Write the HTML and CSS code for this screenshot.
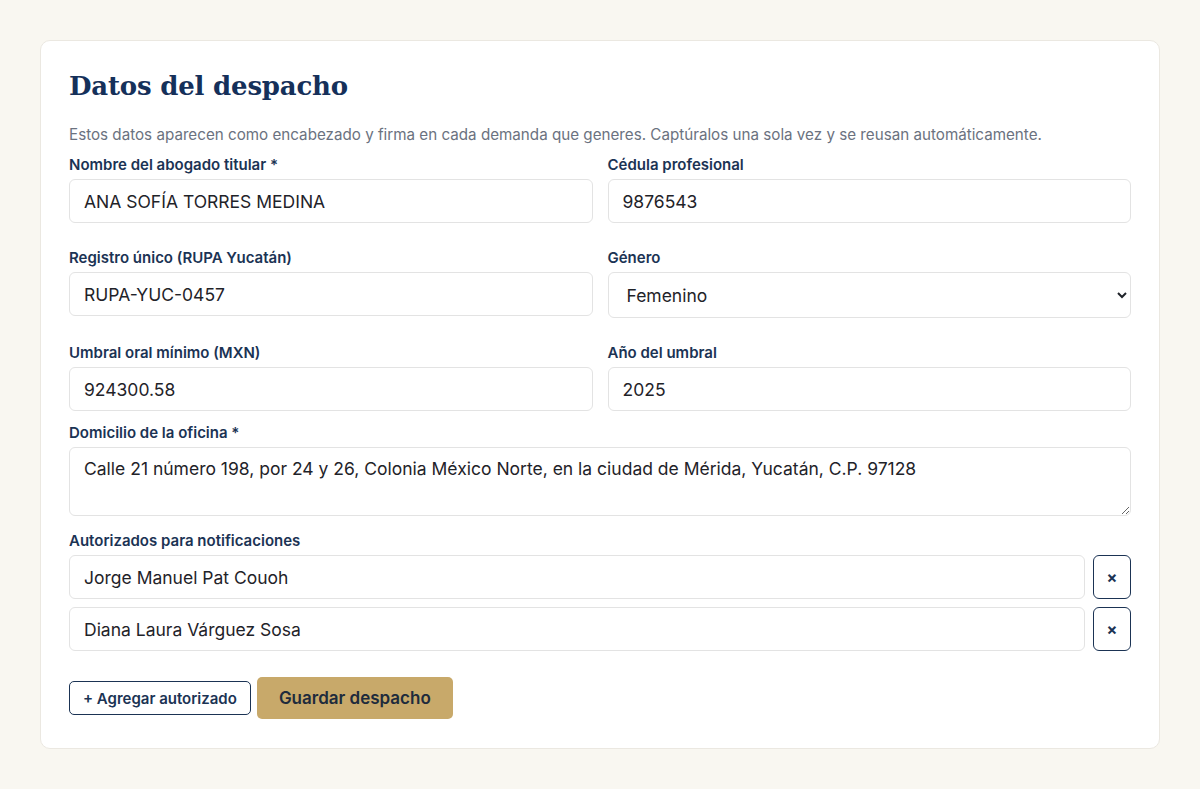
FILE: index.html
```html
<!DOCTYPE html>
<html lang="es">
	<head>
		<meta charset="UTF-8">
		<meta name="viewport" content="width=device-width,initial-scale=1.0">
		<title>Datos del despacho</title>
		<link rel="stylesheet" href="styles.css">
	</head>
	<body>
		<div class="card">
			<h1 class="title">Datos del despacho</h1>
			<p class="hint">Estos datos aparecen como encabezado y firma en cada demanda que generes. Captúralos una sola vez y se reusan automáticamente.</p>
			<form id="frmDespacho">
				<div class="grid">
					<div class="field">
						<label for="abogado">Nombre del abogado titular *</label>
						<input id="abogado" type="text" value="ANA SOFÍA TORRES MEDINA">
					</div>
					<div class="field">
						<label for="cedula">Cédula profesional</label>
						<input id="cedula" type="text" value="9876543">
					</div>
					<div class="field">
						<label for="rupa">Registro único (RUPA Yucatán)</label>
						<input id="rupa" type="text" value="RUPA-YUC-0457">
					</div>
					<div class="field">
						<label for="genero">Género</label>
						<select id="genero">
							<option>Masculino</option>
							<option selected>Femenino</option>
						</select>
					</div>
					<div class="field">
						<label for="umbral">Umbral oral mínimo (MXN)</label>
						<input id="umbral" type="text" value="924300.58">
					</div>
					<div class="field">
						<label for="anio">Año del umbral</label>
						<input id="anio" type="text" value="2025">
					</div>
				</div>
				<div class="field tight">
					<label for="domicilio">Domicilio de la oficina *</label>
					<textarea id="domicilio" rows="2">Calle 21 número 198, por 24 y 26, Colonia México Norte, en la ciudad de Mérida, Yucatán, C.P. 97128</textarea>
				</div>
				<div class="field">
					<label>Autorizados para notificaciones</label>
					<div id="autorizados">
						<div class="row">
							<input type="text" value="Jorge Manuel Pat Couoh">
							<button type="button" class="btnRemove">×</button>
						</div>
						<div class="row">
							<input type="text" value="Diana Laura Várguez Sosa">
							<button type="button" class="btnRemove">×</button>
						</div>
					</div>
				</div>
				<div class="actions">
					<button type="button" class="btnAdd">+ Agregar autorizado</button>
					<button type="submit" class="btnSave">Guardar despacho</button>
				</div>
			</form>
		</div>
	</body>
</html>
```

FILE: styles.css
```css
body{margin:0;background:#f9f7f1;font-family:Inter,"Noto Sans",sans-serif;color:#1f2937;padding:40px;}
.card{background:#fff;border:1px solid #ebe8e1;border-radius:10px;padding:27px 28px 29px 28px;}
.title{font-family:"DejaVu Serif","Liberation Serif",serif;font-size:26px;font-weight:700;color:#15305a;margin:0 0 22px 0;line-height:36px;letter-spacing:-0.2px;}
.hint{font-size:15.2px;color:#6b7280;margin:0 0 12px 0;line-height:18px;}
.grid{display:grid;grid-template-columns:1fr 1fr;column-gap:15px;row-gap:13px;}
.field{margin-bottom:13px;}
.field.tight{margin-bottom:12px;}
.field label{display:block;font-size:15px;font-weight:600;color:#1b3354;line-height:18px;margin-bottom:5px;}
input,select,textarea{font-family:Inter,"Noto Sans",sans-serif;font-size:17.5px;color:#1f2329;border:1px solid #e3e3e3;border-radius:6px;background:#fff;box-sizing:border-box;width:100%;}
input{height:44px;padding:0 14px;}
select{height:46px;padding:0 14px;}
textarea{height:69px;padding:10px 14px;resize:vertical;line-height:22px;}
#autorizados{display:flex;flex-direction:column;gap:8px;}
.row{display:flex;gap:8px;}
.row input{flex:1;}
.btnRemove{width:38px;height:44px;flex:none;background:#fff;border:1px solid #1b3354;border-radius:6px;color:#1b3354;font-size:16px;font-weight:700;padding:0;font-family:Inter,sans-serif;}
.actions{display:flex;align-items:center;gap:6px;margin-top:26px;}
.btnAdd{height:34px;padding:0 13px;background:#fff;border:1px solid #1b3354;border-radius:5px;color:#1b3354;font-family:Inter,sans-serif;font-size:15px;font-weight:600;}
.btnSave{height:42px;padding:0 22px;background:#c8a96a;border:none;border-radius:5px;color:#1e2b3c;font-family:Inter,sans-serif;font-size:17px;font-weight:600;}
```
